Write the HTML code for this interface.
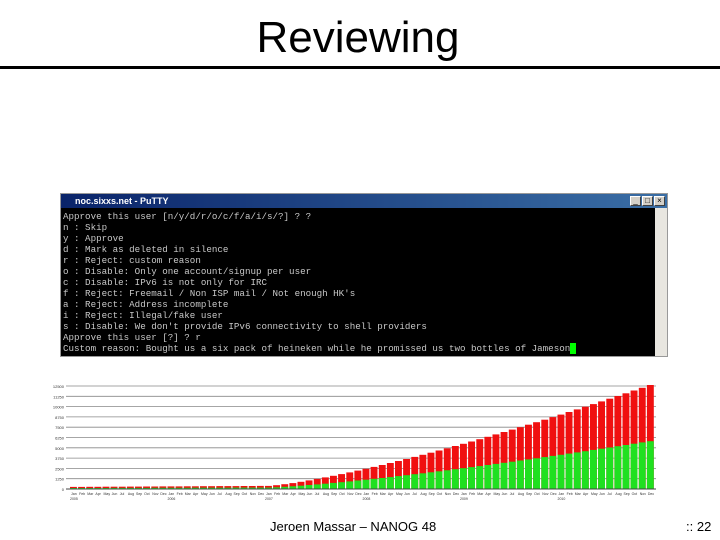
<!DOCTYPE html>
<html><head><meta charset="utf-8"><style>
body{margin:0;width:720px;height:540px;background:#fff;position:relative;overflow:hidden;font-family:"Liberation Sans",sans-serif}
.t{position:absolute;left:0;width:716px;top:13px;text-align:center;font-size:44px;line-height:50px;color:#000}
.hr{position:absolute;left:0;width:720px;top:66px;height:3px;background:#000}
.win{position:absolute;left:60px;top:193px;width:608px;height:164px;background:#000;border:1px solid #999;box-sizing:border-box}
.tb{height:14px;background:linear-gradient(90deg,#0a246a,#3a6ea5);color:#fff;font-size:9px;line-height:14px;padding-left:14px;font-weight:bold}
.btns{position:absolute;right:2px;top:2px;display:flex;gap:1px}
.btns div{width:11px;height:10px;background:#d4d0c8;border:1px solid #fff;border-right-color:#404040;border-bottom-color:#404040;box-sizing:border-box;font-size:8px;line-height:8px;text-align:center;color:#000}
.sb{position:absolute;right:0;top:14px;width:12px;bottom:0;background:#e8e6e0}
.term{position:absolute;left:2px;top:17px;font-family:"Liberation Mono",monospace;font-size:9.2px;line-height:11px;color:#c8c8c8;white-space:pre}
.cur{background:#0f0;color:#0f0}
.f{position:absolute;top:519px;font-size:13px;color:#000}
</style></head><body>
<div class="t">Reviewing</div>
<div class="hr"></div>
<div class="win"><div class="tb">noc.sixxs.net - PuTTY</div>
<div class="btns"><div>_</div><div>□</div><div>×</div></div>
<div class="sb"></div>
<div class="term">Approve this user [n/y/d/r/o/c/f/a/i/s/?] ? ?
n : Skip
y : Approve
d : Mark as deleted in silence
r : Reject: custom reason
o : Disable: Only one account/signup per user
c : Disable: IPv6 is not only for IRC
f : Reject: Freemail / Non ISP mail / Not enough HK's
a : Reject: Address incomplete
i : Reject: Illegal/fake user
s : Disable: We don't provide IPv6 connectivity to shell providers
Approve this user [?] ? r
Custom reason: Bought us a six pack of heineken while he promissed us two bottles of Jameson<span class="cur">_</span></div>
</div>
<svg id="ch" style="position:absolute;left:0;top:0" width="720" height="540"></svg>
<div class="f" style="left:270px">Jeroen Massar – NANOG 48</div>
<div class="f" style="left:686px">:: 22</div>
<script>
var s='';
for(var i=0;i<11;i++){var y=386+i*10.3;s+='<line x1="66" x2="656" y1="'+y+'" y2="'+y+'" stroke="#888" stroke-width="0.8"/>';}
var x0=70,w=585/72,base=489,H=104;
for(var i=0;i<72;i++){
 var tot;
 if(i<24) tot=0.02+0.01*i/24; else tot=0.03+0.97*Math.pow((i-24)/47,1.3);
 var h=tot*H, g=h*0.46, x=x0+i*w;
 s+='<rect x="'+x.toFixed(1)+'" y="'+(base-h).toFixed(1)+'" width="'+(w-1.2).toFixed(1)+'" height="'+h.toFixed(1)+'" fill="#f01010"/>';
 s+='<rect x="'+x.toFixed(1)+'" y="'+(base-g).toFixed(1)+'" width="'+(w-1.2).toFixed(1)+'" height="'+g.toFixed(1)+'" fill="#20e020"/>';
}
s+='<line x1="66" x2="656" y1="489" y2="489" stroke="#444"/>';
var labels=['12500','11250','10000','8750','7500','6250','5000','3750','2500','1250','0'];
for(var i=0;i<11;i++)s+='<text x="64" y="'+(388+i*10.3)+'" font-size="4" text-anchor="end" fill="#333" font-family="Liberation Sans">'+labels[i]+'</text>';
var m=['Jan','Feb','Mar','Apr','May','Jun','Jul','Aug','Sep','Oct','Nov','Dec'];
for(var i=0;i<72;i++)s+='<text x="'+(x0+i*w+1)+'" y="495" font-size="3.5" fill="#333" font-family="Liberation Sans">'+m[i%12]+'</text>';
for(var k=0;k<6;k++)s+='<text x="'+(x0+k*12*w)+'" y="500" font-size="3.5" fill="#333" font-family="Liberation Sans">'+(2005+k)+'</text>';
document.getElementById('ch').innerHTML=s;
</script>
</body></html>
